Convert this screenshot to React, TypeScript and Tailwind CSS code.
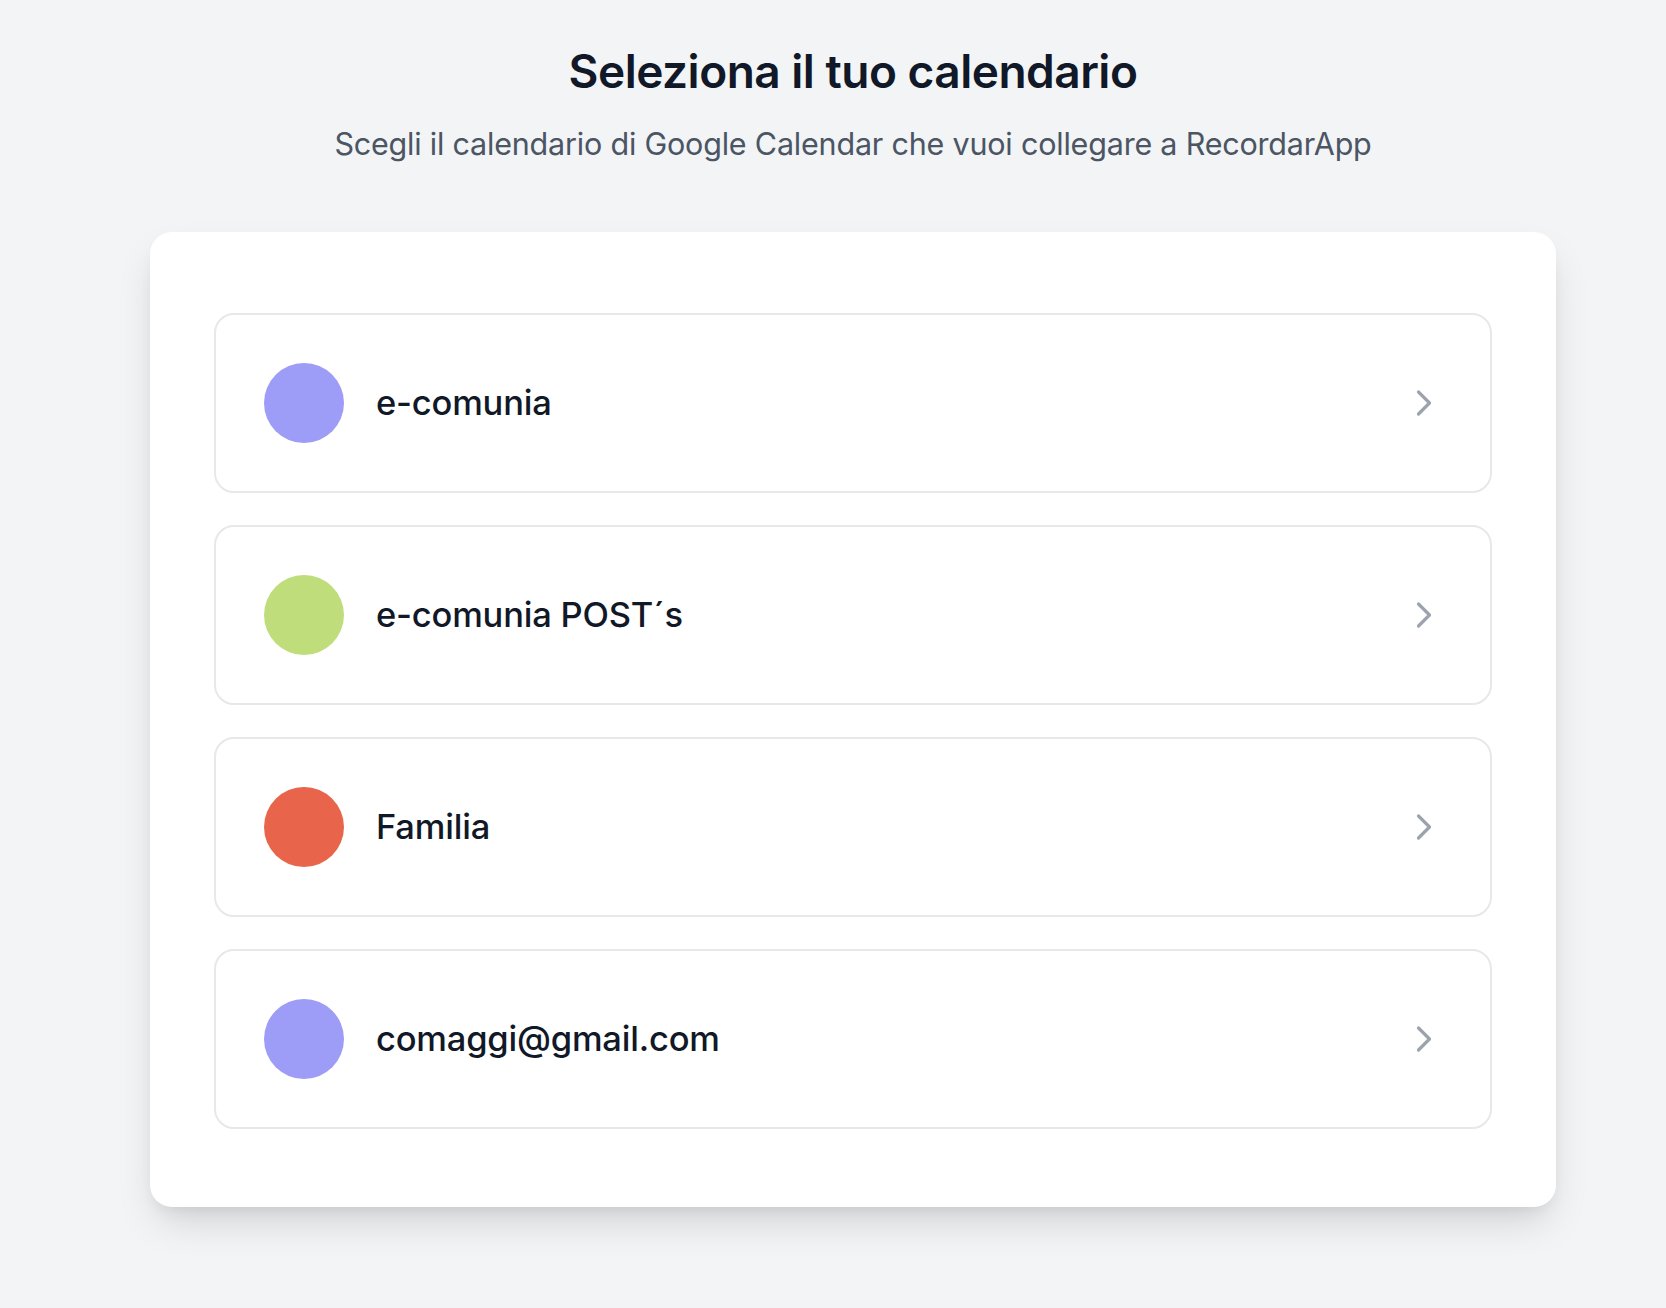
import React from 'react';
import { ChevronRight } from 'lucide-react';

type Calendar = { name: string; color: string };

const calendars: Calendar[] = [
  { name: 'e-comunia', color: 'bg-[#9d9cf7]' },
  { name: 'e-comunia POST´s', color: 'bg-[#bfdd7a]' },
  { name: 'Familia', color: 'bg-[#e8654b]' },
  { name: 'comaggi@gmail.com', color: 'bg-[#9d9cf7]' },
];

function CalendarRow({ cal }: { cal: Calendar }) {
  return (
    <button className="w-full flex items-center gap-8 pl-12 pr-[44px] py-12 bg-white border-2 border-[#e7e8ea] rounded-[20px] text-left hover:bg-gray-50">
      <span className={`w-20 h-20 rounded-full shrink-0 ${cal.color}`} />
      <span className="flex-1 text-[34.5px] leading-[40px] font-medium text-[#111827] tracking-[-0.2px]">{cal.name}</span>
      <ChevronRight size={44} strokeWidth={1.75} className="text-[#9ca3af]" />
    </button>
  );
}

export default function App() {
  return (
    <div className="min-h-screen bg-[#f2f4f6] pl-[150px] pr-[110px] pt-[40px] pb-[100px]" style={{ fontFamily: 'Inter, "Noto Sans", sans-serif' }}>
      <div className="text-center">
        <h1 className="text-[46px] leading-[62px] font-semibold text-[#111827] tracking-[-0.5px]">Seleziona il tuo calendario</h1>
        <p className="mt-[22px] text-[30.5px] leading-[40px] text-[#4b5563] tracking-[-0.2px]">
          Scegli il calendario di Google Calendar che vuoi collegare a RecordarApp
        </p>
      </div>
      <div className="mt-[68px] bg-white rounded-[22px] shadow-[0_20px_40px_-8px_rgba(0,0,0,0.15),0_8px_16px_-6px_rgba(0,0,0,0.08)] px-16 pt-[81px] pb-[78px]">
        <div className="flex flex-col gap-8">
          {calendars.map((c) => (
            <CalendarRow key={c.name} cal={c} />
          ))}
        </div>
      </div>
    </div>
  );
}
